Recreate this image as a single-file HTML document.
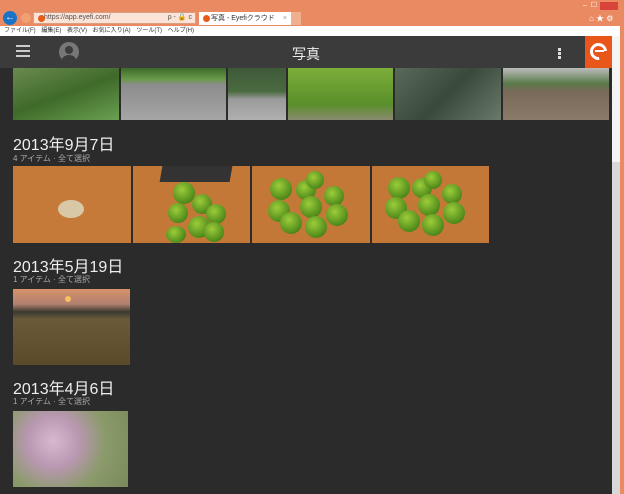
<!DOCTYPE html>
<html><head><meta charset="utf-8"><style>
*{margin:0;padding:0;box-sizing:border-box}
body{width:624px;height:494px;overflow:hidden;background:#e98a62;font-family:"Liberation Sans","Noto Sans CJK JP",sans-serif;position:relative}
.a{position:absolute}
.img{position:absolute}
.h{position:absolute;left:13px;color:#eee;font-size:16px;font-family:"Liberation Sans","Noto Sans CJK JP",sans-serif}
.s{position:absolute;left:13px;color:#aaa;font-size:8px}
.lime{position:absolute;border-radius:50%;background:radial-gradient(circle at 40% 35%,#9ccc3a,#4f8a1a 70%,#2f5a10)}
</style></head><body>
<div class="a" style="left:0;top:0;width:624px;height:26px;background:#e98a62"></div>
<div class="a" style="left:3px;top:11px;width:14px;height:14px;border-radius:50%;background:#1a73c7;color:#fff;font-size:10px;line-height:14px;text-align:center">←</div>
<div class="a" style="left:21px;top:13px;width:10px;height:10px;border-radius:50%;background:#f0a070"></div>
<div class="a" style="left:33px;top:12px;width:163px;height:12px;background:#fbe3d8;border:1px solid #d8a080;font-size:7px;line-height:10px;color:#555;padding-left:10px">https://app.eyefi.com/<span style="float:right;padding-right:3px">ρ - 🔒 c</span></div>
<div class="a" style="left:199px;top:12px;width:92px;height:13px;background:#fff;font-size:7px;line-height:13px;color:#333;padding-left:12px">写真 - Eyefiクラウド<span style="float:right;padding-right:4px;color:#999">×</span></div>
<div class="a" style="left:203px;top:15px;width:7px;height:7px;border-radius:50%;background:#e85a1a"></div>
<div class="a" style="left:38px;top:15px;width:7px;height:7px;border-radius:50%;background:#e85a1a"></div>
<div class="a" style="left:291px;top:12px;width:10px;height:13px;background:#f0b090"></div>
<div class="a" style="left:600px;top:2px;width:18px;height:8px;background:#d8433a"></div>
<div class="a" style="left:583px;top:1px;font-size:7px;color:#fff">–&nbsp; ☐</div>
<div class="a" style="left:589px;top:13px;font-size:8px;color:#fff">⌂ ★ ⚙</div>
<div class="a" style="left:0;top:26px;width:620px;height:10px;background:#fff;font-size:6px;line-height:10px;color:#333;padding-left:4px;word-spacing:4px">ファイル(F) 編集(E) 表示(V) お気に入り(A) ツール(T) ヘルプ(H)</div>
<div class="a" style="left:0;top:36px;width:612px;height:32px;background:#3b3b3b"></div>
<div class="a" style="left:16px;top:45px;width:14px;height:2px;background:#ccc;box-shadow:0 5px 0 #ccc,0 10px 0 #ccc"></div>
<div class="a" style="left:59px;top:42px;width:20px;height:20px;border-radius:50%;background:#777;overflow:hidden"><div class="a" style="left:6px;top:4px;width:8px;height:8px;border-radius:50%;background:#3b3b3b"></div><div class="a" style="left:3px;top:13px;width:14px;height:10px;border-radius:50%;background:#3b3b3b"></div></div>
<div class="a" style="left:292px;top:44px;color:#eee;font-size:14px">写真</div>
<div class="a" style="left:558px;top:48px;width:3px;height:3px;background:#ddd;box-shadow:0 4px 0 #ddd,0 8px 0 #ddd"></div>
<div class="a" style="left:585px;top:36px;width:27px;height:32px;background:#e8561a"></div>
<div class="a" style="left:590px;top:43px;width:17px;height:17px;border-radius:50%;border:3px solid #fff;border-right-color:transparent;transform:rotate(40deg)"></div>
<div class="a" style="left:595px;top:50px;width:9px;height:2px;background:#fff"></div>
<div class="a" style="left:0;top:68px;width:612px;height:426px;background:#2b2b2b"></div>
<div class="a" style="left:612px;top:36px;width:8px;height:458px;background:#d8d8d8"></div>
<div class="a" style="left:612px;top:36px;width:8px;height:126px;background:#f4f4f4"></div>
<div class="a" style="left:620px;top:26px;width:4px;height:468px;background:#e98a62"></div>
<div class="img" style="left:13px;top:68px;width:106px;height:52px;background:linear-gradient(160deg,#6a8a50,#3f6a2a 50%,#6aa050)"></div>
<div class="img" style="left:121px;top:68px;width:105px;height:52px;background:linear-gradient(180deg,#3c6a2a 0,#6a9a4a 22%,#8c8c8c 32%,#a6a6a6)"></div>
<div class="img" style="left:228px;top:68px;width:58px;height:52px;background:linear-gradient(180deg,#3f5a3a 0,#4a6a40 45%,#9a9a9a 60%,#b0b0b0)"></div>
<div class="img" style="left:288px;top:68px;width:105px;height:52px;background:linear-gradient(180deg,#7cae3a,#5a8f2a 70%,#8a8a70)"></div>
<div class="img" style="left:395px;top:68px;width:106px;height:52px;background:linear-gradient(135deg,#5a6a5a,#3a4a3a 50%,#6a7a6a)"></div>
<div class="img" style="left:503px;top:68px;width:106px;height:52px;background:linear-gradient(180deg,#bcbcbc 0,#5a7a4a 30%,#7a6a5a 45%,#8a7a6a)"></div>
<div class="h" style="top:131px">2013年9月7日</div>
<div class="s" style="top:153px">4 アイテム · 全て選択</div>
<div class="img" style="left:13px;top:166px;width:118px;height:77px;background:#c67a3a"></div>
<div class="a" style="left:58px;top:200px;width:26px;height:18px;border-radius:50%;background:#d8c8a8"></div>
<div class="img" style="left:133px;top:166px;width:117px;height:77px;background:#c47838;overflow:hidden"><div class="a" style="left:28px;top:0;width:70px;height:16px;background:#333;transform:skewX(-10deg)"></div></div>
<div class="img" style="left:252px;top:166px;width:118px;height:77px;background:#c47838"></div>
<div class="img" style="left:372px;top:166px;width:117px;height:77px;background:#c47838"></div>
<div class="lime" style="left:173px;top:182px;width:22px;height:22px"></div><div class="lime" style="left:192px;top:194px;width:20px;height:20px"></div><div class="lime" style="left:206px;top:204px;width:20px;height:20px"></div><div class="lime" style="left:168px;top:203px;width:20px;height:20px"></div><div class="lime" style="left:188px;top:216px;width:22px;height:22px"></div><div class="lime" style="left:166px;top:226px;width:20px;height:17px"></div><div class="lime" style="left:204px;top:222px;width:20px;height:20px"></div>
<div class="lime" style="left:270px;top:178px;width:22px;height:22px"></div><div class="lime" style="left:296px;top:180px;width:20px;height:20px"></div><div class="lime" style="left:306px;top:171px;width:18px;height:18px"></div><div class="lime" style="left:324px;top:186px;width:20px;height:20px"></div><div class="lime" style="left:300px;top:196px;width:22px;height:22px"></div><div class="lime" style="left:268px;top:200px;width:22px;height:22px"></div><div class="lime" style="left:280px;top:212px;width:22px;height:22px"></div><div class="lime" style="left:305px;top:216px;width:22px;height:22px"></div><div class="lime" style="left:326px;top:204px;width:22px;height:22px"></div>
<div class="lime" style="left:388px;top:177px;width:22px;height:22px"></div><div class="lime" style="left:412px;top:178px;width:20px;height:20px"></div><div class="lime" style="left:424px;top:171px;width:18px;height:18px"></div><div class="lime" style="left:442px;top:184px;width:20px;height:20px"></div><div class="lime" style="left:418px;top:194px;width:22px;height:22px"></div><div class="lime" style="left:385px;top:197px;width:22px;height:22px"></div><div class="lime" style="left:398px;top:210px;width:22px;height:22px"></div><div class="lime" style="left:422px;top:214px;width:22px;height:22px"></div><div class="lime" style="left:443px;top:202px;width:22px;height:22px"></div>
<div class="h" style="top:253px">2013年5月19日</div>
<div class="s" style="top:274px">1 アイテム · 全て選択</div>
<div class="img" style="left:13px;top:289px;width:117px;height:76px;background:linear-gradient(180deg,#d8926a 0,#b08070 20%,#3a3a30 30%,#6a5a3a 40%,#5a4a2a)"></div>
<div class="a" style="left:65px;top:296px;width:6px;height:6px;border-radius:50%;background:#f8c060"></div>
<div class="h" style="top:375px">2013年4月6日</div>
<div class="s" style="top:396px">1 アイテム · 全て選択</div>
<div class="img" style="left:13px;top:411px;width:115px;height:76px;background:radial-gradient(circle at 35% 40%,#d8b8d0 0,#b898b0 30%,#8a9a6a 60%,#7a8a5a)"></div>
</body></html>
